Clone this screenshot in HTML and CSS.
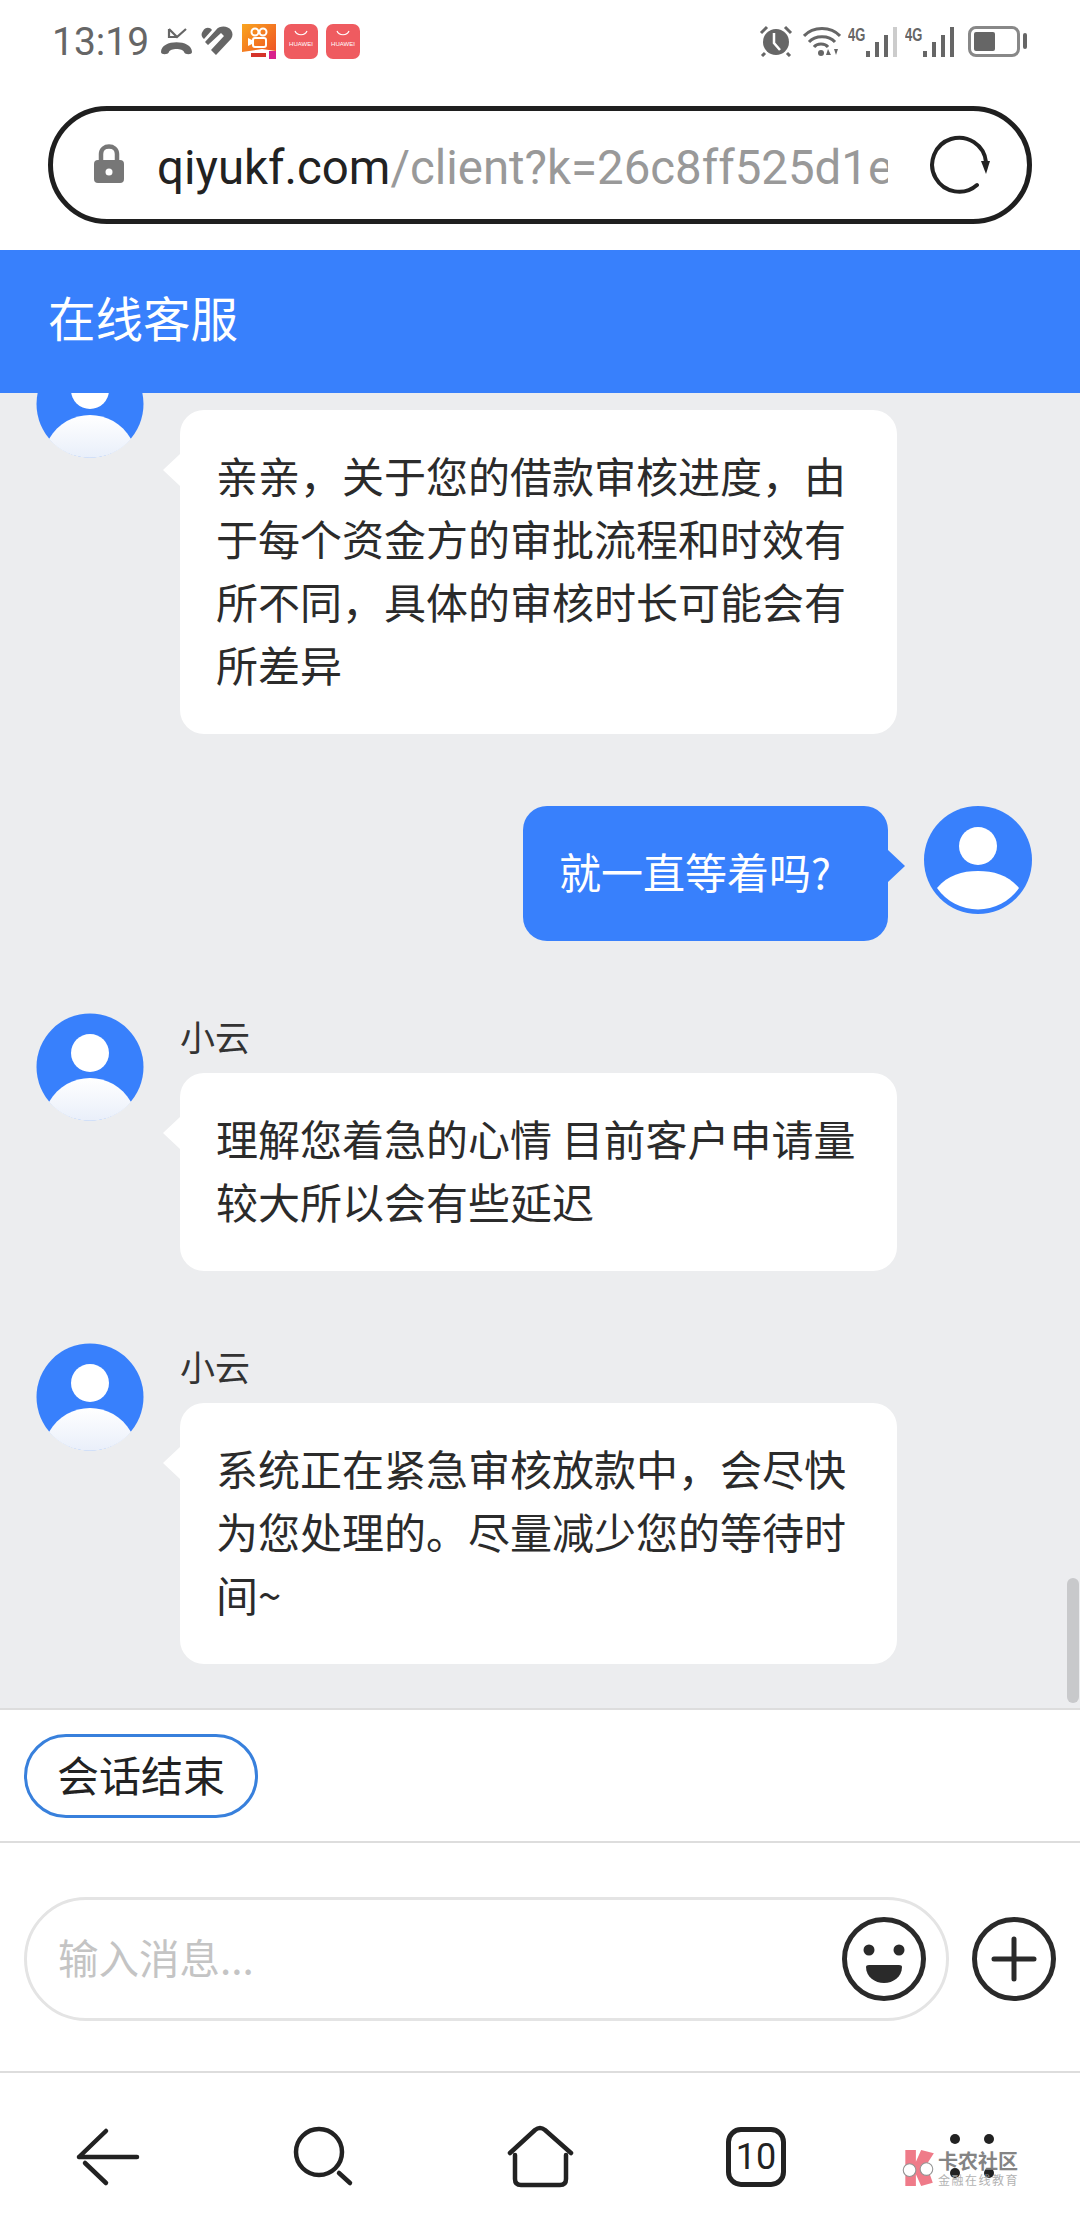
FILE: index.html
```html
<!DOCTYPE html>
<html lang="zh">

<head>
    <meta charset="UTF-8">
    <title>在线客服</title>
    <link rel="stylesheet" href="styles.css">
</head>

<body>
    <svg class="defs" width="0" height="0">
        <defs>
            <linearGradient id="bodyFade" x1="0" y1="0" x2="0" y2="1">
                <stop offset="0" stop-color="#fff" />
                <stop offset="1" stop-color="#e9effa" />
            </linearGradient>
            <symbol id="staff" viewBox="0 0 108 108">
                <circle cx="54" cy="54" r="53.5" fill="#3880fc" />
                <circle cx="54" cy="40" r="19" fill="#fff" />
                <path d="M13 89C22 73 38 65 54 65S86 73 95 89A54 54 0 0 1 13 89Z" fill="url(#bodyFade)" />
            </symbol>
            <symbol id="guest" viewBox="0 0 108 108">
                <circle cx="54" cy="54" r="54" fill="#3880fc" />
                <circle cx="54" cy="40" r="19" fill="#fff" />
                <path d="M13 82C24 69 38 65 54 65S84 69 95 82A50 50 0 0 1 13 82Z" fill="#fff" />
            </symbol>
        </defs>
    </svg>

    <!-- 状态栏 -->
    <div class="status">
        <div class="status-left">
            <span class="time">13:19</span>
            <svg class="ico-missed" width="33" height="30" viewBox="0 0 33 30">
                <path d="M9 3V11H17M9 3L17 11L26 3" fill="none" stroke="#666" stroke-width="2.2" />
                <path d="M1 26C1 13 32 13 32 26C32 29 25 29 24 26C23 22 10 22 9 26C8 29 1 29 1 26Z" fill="#666" />
            </svg>
            <svg class="ico-heart" width="33" height="32" viewBox="0 0 33 32">
                <path d="M3 6C5 2 10 2 12 5L4 14C1 11 1 9 3 6ZM16 5C20 0 28 1 31 5C33 8 33 11 31 14L16 30L11 25L24 11L21 8L8 20L5 17Z" fill="#666" />
            </svg>
            <svg class="app" width="34" height="35" viewBox="0 0 34 35">
                <defs>
                    <linearGradient id="ksBg" x1="0" y1="0" x2="1" y2="1">
                        <stop offset="0" stop-color="#f9a51f" />
                        <stop offset="1" stop-color="#ee4a24" />
                    </linearGradient>
                </defs>
                <rect width="34" height="35" fill="url(#ksBg)" />
                <path d="M0 28L20 25L34 27V35H0Z" fill="#fff" />
                <path d="M27 27H34V35H27Z" fill="#d8218c" />
                <circle cx="13" cy="8" r="3.5" fill="none" stroke="#fff" stroke-width="2" />
                <circle cx="21" cy="8" r="3.5" fill="none" stroke="#fff" stroke-width="2" />
                <rect x="11" y="14" width="13" height="9" rx="2" fill="none" stroke="#fff" stroke-width="2" />
                <path d="M10 16L6 14V22L10 20Z" fill="#fff" />
                <rect x="9" y="29" width="15" height="4" fill="#d5342b" />
            </svg>
            <div class="hw">
                <svg width="14" height="6" viewBox="0 0 14 6">
                    <path d="M1 1C3 6 11 6 13 1" fill="none" stroke="#fff" stroke-width="1.2" />
                </svg>
                <span>HUAWEI</span>
            </div>
            <div class="hw">
                <svg width="14" height="6" viewBox="0 0 14 6">
                    <path d="M1 1C3 6 11 6 13 1" fill="none" stroke="#fff" stroke-width="1.2" />
                </svg>
                <span>HUAWEI</span>
            </div>
        </div>
        <div class="status-right">
            <svg width="34" height="32" viewBox="0 0 34 32">
                <circle cx="17" cy="17" r="13" fill="#666" />
                <path d="M15 8V18L21 25" fill="none" stroke="#fff" stroke-width="2.5" />
                <path d="M2 8L8 2M32 8L26 2M6 28L3 31M28 28L31 31" stroke="#666" stroke-width="3" />
            </svg>
            <svg class="ico-wifi" width="38" height="32" viewBox="0 0 38 32">
                <path d="M1 11C10 1 28 1 37 11M6 17C12 10 26 10 32 17M11 22C14 18 22 18 25 22" fill="none" stroke="#666" stroke-width="3" />
                <circle cx="18" cy="28" r="3" fill="#666" />
                <path d="M25 24L28 30H23ZM33 30L31 24H35Z" fill="#666" />
            </svg>
            <div class="net">
                <span>4G</span>
                <svg width="32" height="30" viewBox="0 0 32 30">
                    <rect x="0" y="24" width="4" height="6" fill="#666" />
                    <rect x="9" y="15" width="4" height="15" fill="#666" />
                    <rect x="18" y="8" width="4" height="22" fill="#666" />
                    <rect x="27" y="0" width="4" height="30" fill="#ccc" />
                </svg>
            </div>
            <div class="net">
                <span>4G</span>
                <svg width="32" height="30" viewBox="0 0 32 30">
                    <rect x="0" y="24" width="4" height="6" fill="#666" />
                    <rect x="9" y="15" width="4" height="15" fill="#666" />
                    <rect x="18" y="8" width="4" height="22" fill="#666" />
                    <rect x="27" y="0" width="4" height="30" fill="#666" />
                </svg>
            </div>
            <div class="battery"><i></i></div>
        </div>
    </div>

    <!-- 地址栏 -->
    <div class="urlrow">
        <div class="urlbar">
            <svg class="lock" width="32" height="40" viewBox="0 0 32 40">
                <path d="M8 18V10C8 0 24 0 24 10V18" fill="none" stroke="#777" stroke-width="4.5" />
                <rect x="1" y="16" width="30" height="23" rx="4" fill="#777" />
                <circle cx="16" cy="28" r="3.5" fill="#fff" />
            </svg>
            <div class="url">qiyukf.com<span>/client?k=26c8ff525d1e7a90c3f4</span></div>
            <svg class="reload" width="60" height="60" viewBox="0 0 60 60">
                <path d="M47 50A27 27 0 1 1 56 27" fill="none" stroke="#222" stroke-width="4" stroke-linecap="round" />
                <path d="M51 26H60L56 39Z" fill="#222" />
            </svg>
        </div>
    </div>

    <div class="head">在线客服</div>

    <!-- 聊天内容 -->
    <div class="chat">
        <div class="msg">
            <svg class="avatar"><use href="#staff" /></svg>
            <div class="msg-body">
                <div class="name">小云</div>
                <div class="bubble">亲亲，关于您的借款审核进度，由于每个资金方的审批流程和时效有所不同，具体的审核时长可能会有所差异</div>
            </div>
        </div>
        <div class="msg msg-me">
            <div class="bubble">就一直等着吗?</div>
            <svg class="avatar"><use href="#guest" /></svg>
        </div>
        <div class="msg">
            <svg class="avatar"><use href="#staff" /></svg>
            <div class="msg-body">
                <div class="name">小云</div>
                <div class="bubble">理解您着急的心情 目前客户申请量较大所以会有些延迟</div>
            </div>
        </div>
        <div class="msg">
            <svg class="avatar"><use href="#staff" /></svg>
            <div class="msg-body">
                <div class="name">小云</div>
                <div class="bubble">系统正在紧急审核放款中，会尽快为您处理的。尽量减少您的等待时间~</div>
            </div>
        </div>
        <div class="scrollbar"></div>
    </div>

    <div class="chips">
        <span class="chip">会话结束</span>
    </div>

    <!-- 输入框 -->
    <div class="inputrow">
        <div class="input">
            <span class="holder">输入消息...</span>
            <svg width="84" height="84" viewBox="0 0 84 84">
                <circle cx="42" cy="42" r="39.5" fill="#fff" stroke="#2a2a2a" stroke-width="5" />
                <circle cx="27" cy="33" r="5.5" fill="#2a2a2a" />
                <circle cx="57" cy="33" r="5.5" fill="#2a2a2a" />
                <path d="M24 50Q24 48 27 48H57Q60 48 60 50C60 60 51 66 42 66C33 66 24 60 24 50Z" fill="#2a2a2a" />
            </svg>
        </div>
        <svg width="84" height="84" viewBox="0 0 84 84">
            <circle cx="42" cy="42" r="39.5" fill="none" stroke="#2a2a2a" stroke-width="5" />
            <path d="M22 42H62M42 22V62" stroke="#2a2a2a" stroke-width="5" stroke-linecap="round" />
        </svg>
    </div>

    <!-- 底部导航 -->
    <div class="nav">
        <svg width="72" height="64" viewBox="0 0 72 64">
            <path d="M7 32H65M7 32L34 6M13 38L34 58" fill="none" stroke="#222" stroke-width="4.5" stroke-linecap="round" />
        </svg>
        <svg width="72" height="64" viewBox="0 0 72 64">
            <circle cx="31" cy="27" r="23" fill="none" stroke="#222" stroke-width="4.5" />
            <path d="M51 48L62 58" stroke="#222" stroke-width="4.5" stroke-linecap="round" />
        </svg>
        <svg width="72" height="64" viewBox="0 0 72 64">
            <path d="M6 28L31 5Q36 1 41 5L67 28M11 30V54Q11 60 17 60H56Q62 60 62 54V30" fill="none" stroke="#222" stroke-width="4.5" stroke-linecap="round" />
        </svg>
        <div class="tabs">10</div>
        <svg width="72" height="64" viewBox="0 0 72 64">
            <circle cx="19" cy="14" r="5" fill="#222" />
            <circle cx="53" cy="14" r="5" fill="#222" />
            <circle cx="19" cy="48" r="5" fill="#222" />
            <circle cx="53" cy="48" r="5" fill="#222" />
        </svg>
    </div>

    <!-- 水印 -->
    <div class="mark">
        <svg width="36" height="38" viewBox="0 0 34 36">
            <path d="M5 1H15V12L20 1L32 4L25 15L31 32L20 35L15 24V35H5Z" fill="#ee6d7d" />
            <circle cx="9" cy="20" r="6" fill="#fff" stroke="#888" stroke-width="1" />
            <circle cx="25" cy="19" r="6" fill="#fff" stroke="#888" stroke-width="1" />
        </svg>
        <div class="mark-text">
            <b>卡农社区</b>
            <span>金融在线教育</span>
        </div>
    </div>
</body>

</html>
```

FILE: styles.css
```css
/* reset */
body,
div,
span {
    margin: 0;
    padding: 0;
}

body {
    position: relative;
    width: 1080px;
    height: 2240px;
    overflow: hidden;
    display: flex;
    flex-direction: column;
    background: #fff;
    font-family: "Noto Sans CJK SC", "Noto Sans", sans-serif;
    color: #2b2b2b;
}

svg {
    display: block;
    flex: none;
}

.defs {
    position: absolute;
}

/* status bar */
.status {
    height: 82px;
    flex: none;
    display: flex;
    justify-content: space-between;
    align-items: center;
    padding: 0 52px 0 52px;
}

.status-left,
.status-right {
    display: flex;
    align-items: center;
}

.time {
    width: 97px;
    margin-top: 2px;
    font: 39px Roboto, sans-serif;
    color: #666;
}

.ico-missed {
    margin-left: 11px;
}

.ico-heart {
    margin-left: 7px;
}

.app {
    margin-left: 9px;
}

.hw {
    width: 34px;
    height: 35px;
    margin-left: 8px;
    border-radius: 7px;
    background: #ef5b60;
    display: flex;
    flex-direction: column;
    align-items: center;
    padding-top: 6px;
    box-sizing: border-box;
}

.hw span {
    font: 6px/10px "Liberation Sans", sans-serif;
    color: #fff;
    margin-top: 3px;
}

.status-right {
    gap: 9px;
}

.ico-wifi {
    margin-left: 1px;
}

.net {
    display: flex;
    align-items: flex-end;
    height: 31px;
    margin-left: -2px;
}

.net span {
    align-self: flex-start;
    font: bold 18px/18px "Liberation Sans", sans-serif;
    transform: scaleX(0.72);
    transform-origin: left;
    width: 18px;
    color: #666;
}

.battery {
    width: 52px;
    height: 31px;
    margin-left: 4px;
    margin-right: 8px;
    box-sizing: border-box;
    border: 3px solid #888;
    border-radius: 8px;
    padding: 3px;
    position: relative;
}

.battery i {
    display: block;
    width: 21px;
    height: 100%;
    background: #666;
    border-radius: 2px;
}

.battery::after {
    content: "";
    position: absolute;
    left: 52px;
    top: 4px;
    width: 4px;
    height: 16px;
    border-radius: 2px;
    background: #666;
}

/* url bar */
.urlrow {
    height: 168px;
    flex: none;
    padding: 24px 48px 0;
    box-sizing: border-box;
}

.urlbar {
    height: 118px;
    box-sizing: border-box;
    border: 5px solid #1f1f1f;
    border-radius: 59px;
    display: flex;
    align-items: center;
    padding-left: 40px;
}

.lock {
    margin-top: -2px;
}

.url {
    width: 731px;
    margin-left: 32px;
    padding-top: 6px;
    white-space: nowrap;
    overflow: hidden;
    font: 47.4px Roboto, sans-serif;
    color: #222;
}

.url span {
    color: #999;
}

.reload {
    margin-left: 42px;
}

.head {
    height: 143px;
    flex: none;
    box-sizing: border-box;
    padding: 0 48px;
    background: #3880fc;
    color: #fff;
    font-size: 47.5px;
    line-height: 134px;
    position: relative;
    z-index: 2;
}

/* chat */
.chat {
    flex: 1;
    min-height: 0;
    position: relative;
    overflow: hidden;
    display: flex;
    flex-direction: column;
    justify-content: flex-end;
    gap: 72px;
    padding: 0 48px 44px 36px;
    background: #ecedef;
}

.msg {
    display: flex;
    gap: 36px;
    flex: none;
}

.msg-me {
    justify-content: flex-end;
}

.avatar {
    width: 108px;
    height: 108px;
}

.name {
    height: 60px;
    font-size: 35px;
    line-height: 46px;
    color: #333;
}

.bubble {
    width: 717px;
    box-sizing: border-box;
    padding: 33px 36px 39px;
    position: relative;
    background: #fff;
    border-radius: 24px;
    font-size: 42px;
    line-height: 63px;
    color: #2b2b2b;
}

.bubble::before {
    content: "";
    position: absolute;
    left: -17px;
    top: 44px;
    border-style: solid;
    border-width: 16px 17px 16px 0;
    border-color: transparent #fff transparent transparent;
}

.msg-me .bubble {
    width: auto;
    padding-right: 57px;
    background: #3880fc;
    color: #fff;
}

.msg-me .bubble::before {
    left: auto;
    right: -17px;
    border-width: 16px 0 16px 17px;
    border-color: transparent transparent transparent #3880fc;
}

.scrollbar {
    position: absolute;
    right: 1px;
    bottom: 5px;
    width: 12px;
    height: 125px;
    border-radius: 6px;
    background: #c8c9cb;
}

/* quick reply */
.chips {
    height: 135px;
    flex: none;
    box-sizing: border-box;
    border-top: 2px solid #ddd;
    border-bottom: 2px solid #ddd;
    padding: 24px;
}

.chip {
    display: inline-block;
    width: 234px;
    height: 84px;
    box-sizing: border-box;
    border: 3px solid #3880dc;
    border-radius: 42px;
    text-align: center;
    font-size: 42px;
    line-height: 73px;
    color: #222;
}

/* input */
.inputrow {
    height: 230px;
    flex: none;
    box-sizing: border-box;
    border-bottom: 2px solid #ddd;
    padding: 54px 24px 0;
    display: flex;
    align-items: flex-start;
    gap: 26px;
}

.input {
    width: 926px;
    height: 124px;
    box-sizing: border-box;
    border: 3px solid #e4e4e4;
    border-radius: 62px;
    display: flex;
    align-items: center;
    justify-content: space-between;
    padding: 0 20px 0 31px;
}

.inputrow > svg {
    margin-top: 20px;
    margin-left: -3px;
}

.holder {
    padding-bottom: 6px;
    font-size: 40.5px;
    color: #c4c4c4;
}

/* bottom nav */
.nav {
    height: 167px;
    flex: none;
    display: grid;
    grid-template-columns: repeat(5, 216px);
    justify-items: center;
    align-items: center;
}

.tabs {
    width: 60px;
    height: 60px;
    box-sizing: border-box;
    border: 5px solid #222;
    border-radius: 15px;
    text-align: center;
    font: 36px/50px Roboto, sans-serif;
    color: #222;
}

/* watermark */
.mark {
    position: absolute;
    left: 900px;
    top: 2149px;
    display: flex;
    gap: 2px;
    align-items: center;
    opacity: 0.9;
}

.mark-text {
    display: flex;
    flex-direction: column;
    color: #777;
}

.mark-text b {
    font-size: 20px;
    line-height: 24px;
}

.mark-text span {
    font-size: 12px;
    line-height: 14px;
    letter-spacing: 1.5px;
    color: #aaa;
}
```
